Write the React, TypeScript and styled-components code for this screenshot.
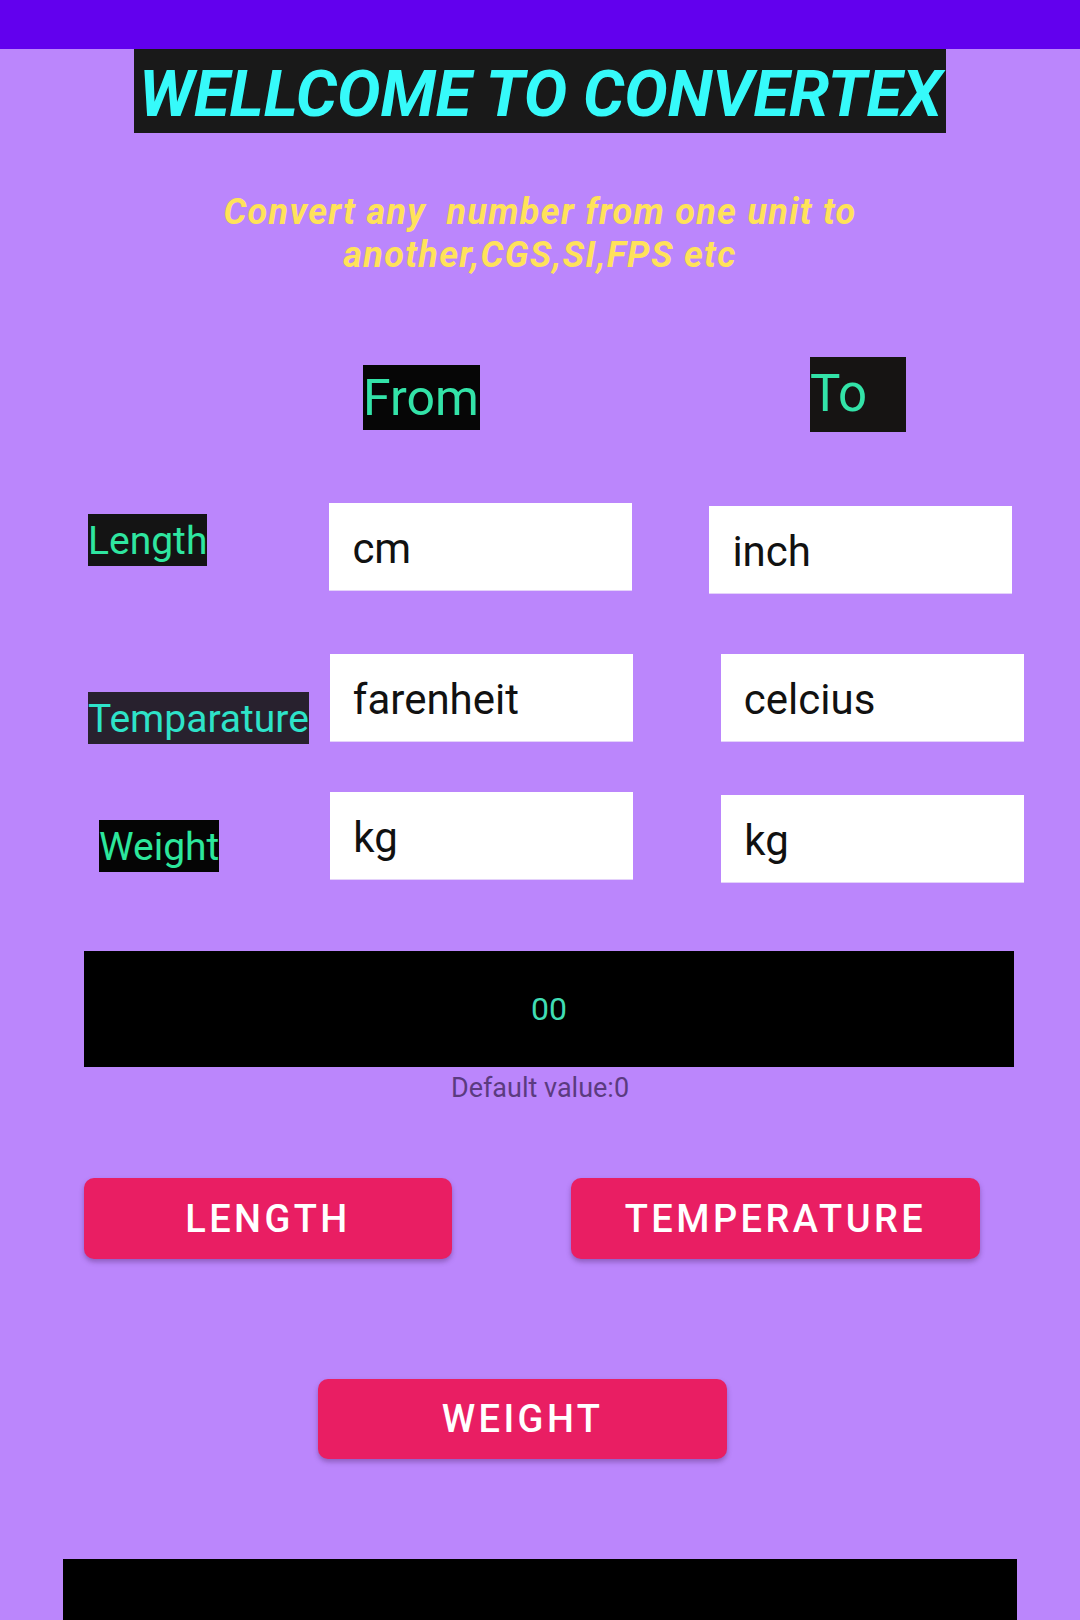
import React from 'react';
import styled, { createGlobalStyle } from 'styled-components';

const GlobalStyle = createGlobalStyle`
  html, body {
    margin: 0;
    padding: 0;
    background: #bb86fc;
    overflow: hidden;
  }
  body {
    font-family: Roboto, 'Liberation Sans', sans-serif;
  }
  * {
    box-sizing: border-box;
  }
`;

type Offset = { $left?: number; $top?: number };

const Screen = styled.div`
  width: 1080px;
  height: 1620px;
  background: #bb86fc;
  display: flex;
  flex-direction: column;
  overflow: hidden;
`;

const StatusBar = styled.div`
  height: 49px;
  flex-shrink: 0;
  background: #6200ee;
`;

const TitleWrap = styled.div`
  display: flex;
  justify-content: center;
`;

const Title = styled.h1`
  margin: 0;
  height: 84px;
  padding: 7px 4px 0 5px;
  line-height: 77px;
  background: #191919;
  color: #36fafa;
  font-size: 65px;
  font-weight: 700;
  font-style: italic;
  white-space: nowrap;
`;

const Subtitle = styled.p`
  margin: 58px 0 0;
  text-align: center;
  color: #ffe25a;
  font-size: 36px;
  line-height: 43px;
  letter-spacing: 1.3px;
  font-weight: 700;
  font-style: italic;
  white-space: pre-wrap;
`;

const Row = styled.div<{ $gap: number }>`
  display: flex;
  align-items: flex-start;
  margin-top: ${(p) => p.$gap}px;
`;

const HeaderTag = styled.div<Offset & { $w: number; $h: number; $size: number; $bg: string; $pad: number }>`
  margin-left: ${(p) => p.$left ?? 0}px;
  margin-top: ${(p) => p.$top ?? 0}px;
  width: ${(p) => p.$w}px;
  height: ${(p) => p.$h}px;
  background: ${(p) => p.$bg};
  color: #33e3a8;
  font-size: ${(p) => p.$size}px;
  line-height: ${(p) => p.$h - 8}px;
  padding-top: ${(p) => p.$pad}px;
  white-space: nowrap;
`;

const Label = styled.div<Offset & { $bg: string; $color: string }>`
  margin-left: ${(p) => p.$left ?? 0}px;
  margin-top: ${(p) => p.$top ?? 0}px;
  height: 52px;
  padding-top: 2px;
  line-height: 50px;
  font-size: 39px;
  background: ${(p) => p.$bg};
  color: ${(p) => p.$color};
  white-space: nowrap;
`;

const UnitInput = styled.input<Offset>`
  margin: ${(p) => p.$top ?? 0}px 0 0 ${(p) => p.$left ?? 0}px;
  width: 303px;
  height: 88px;
  padding: 3px 0 0 23px;
  border: none;
  border-bottom: 1px solid #e4d2fa;
  outline: none;
  background: #ffffff;
  color: #111111;
  font-family: Roboto, 'Liberation Sans', sans-serif;
  font-size: 42px;
`;

const Result = styled.div`
  margin: 68px 0 0 84px;
  width: 930px;
  height: 116px;
  background: #000000;
  color: #40dcb4;
  font-size: 32px;
  display: flex;
  align-items: center;
  justify-content: center;
`;

const Hint = styled.div`
  margin-top: 5px;
  text-align: center;
  color: #5b3b80;
  font-size: 27px;
  line-height: 32px;
`;

const ActionButton = styled.button<{ $left: number; $w: number; $h: number }>`
  margin-left: ${(p) => p.$left}px;
  width: ${(p) => p.$w}px;
  height: ${(p) => p.$h}px;
  border: none;
  border-radius: 10px;
  background: #e91e63;
  color: #ffffff;
  font-family: Roboto, 'Liberation Sans', sans-serif;
  font-size: 38px;
  font-weight: 500;
  letter-spacing: 0.09em;
  box-shadow: 0 3px 5px rgba(60, 20, 80, 0.35);
  cursor: pointer;
`;

const BottomBar = styled.div`
  margin: 100px 0 0 63px;
  width: 954px;
  height: 61px;
  flex-shrink: 0;
  background: #000000;
`;

const App: React.FC = () => {
  return (
    <>
      <GlobalStyle />
      <Screen>
        <StatusBar />
        <TitleWrap>
          <Title>WELLCOME TO CONVERTEX</Title>
        </TitleWrap>
        <Subtitle>{'Convert any  number from one unit to\nanother,CGS,SI,FPS etc'}</Subtitle>

        <Row $gap={80}>
          <HeaderTag $left={363} $top={8} $w={117} $h={65} $size={50} $pad={5} $bg="#060606">
            From
          </HeaderTag>
          <HeaderTag $left={330} $w={96} $h={75} $size={51} $pad={3} $bg="#161413">
            To
          </HeaderTag>
        </Row>

        <Row $gap={71}>
          <Label $left={88} $top={11} $bg="#141414" $color="#2fe6a0">
            Length
          </Label>
          <UnitInput $left={122} defaultValue="cm" />
          <UnitInput $left={77} $top={3} defaultValue="inch" />
        </Row>

        <Row $gap={60}>
          <Label $left={88} $top={38} $bg="#28212e" $color="#2ee3c9">
            Temparature
          </Label>
          <UnitInput $left={21} defaultValue="farenheit" />
          <UnitInput $left={88} defaultValue="celcius" />
        </Row>

        <Row $gap={48}>
          <Label $left={99} $top={28} $bg="#050505" $color="#2ce79c">
            Weight
          </Label>
          <UnitInput $left={111} defaultValue="kg" />
          <UnitInput $left={88} $top={3} defaultValue="kg" />
        </Row>

        <Result>00</Result>
        <Hint>Default value:0</Hint>

        <Row $gap={74}>
          <ActionButton $left={84} $w={368} $h={81}>
            LENGTH
          </ActionButton>
          <ActionButton $left={119} $w={409} $h={81}>
            TEMPERATURE
          </ActionButton>
        </Row>

        <Row $gap={120}>
          <ActionButton $left={318} $w={409} $h={80}>
            WEIGHT
          </ActionButton>
        </Row>

        <BottomBar />
      </Screen>
    </>
  );
};

export default App;
